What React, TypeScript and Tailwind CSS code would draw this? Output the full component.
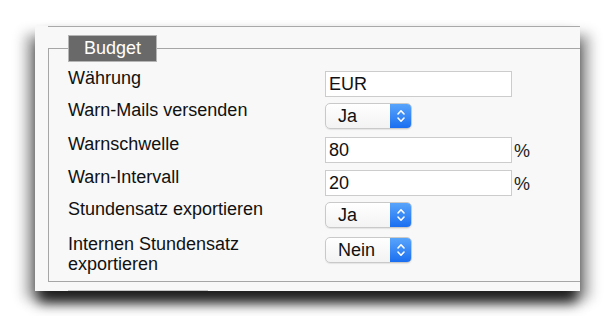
const font = { fontFamily: '"Liberation Sans", Arial, sans-serif' };

const Select = ({ value }: { value: string }) => (
  <div className="mt-[3px] flex h-[26px] w-[87px] overflow-hidden rounded-[5px] border border-[#c9c9c9] bg-gradient-to-b from-white to-[#f3f3f3] shadow-[0_1px_1px_rgba(0,0,0,0.08)]">
    <div className="flex-1 pl-[12px] text-[18px] leading-[24px] text-[#111]">{value}</div>
    <div className="flex w-[21px] items-center justify-center bg-gradient-to-b from-[#58a4fb] to-[#1a6ef0]">
      <svg width="10" height="16" viewBox="0 0 10 16" fill="none">
        <path d="M2 6l3-3.2L8 6" stroke="white" strokeWidth="1.6" strokeLinecap="round" strokeLinejoin="round" />
        <path d="M2 10l3 3.2L8 10" stroke="white" strokeWidth="1.6" strokeLinecap="round" strokeLinejoin="round" />
      </svg>
    </div>
  </div>
);

const TextInput = ({ value, suffix }: { value: string; suffix?: boolean }) => (
  <div className="mt-[3px] flex items-start">
    <div className="h-[26px] w-[187px] border border-[#cccccc] bg-white pl-[3px] text-[18px] leading-[24px] text-[#111]">
      {value}
    </div>
    {suffix && <span className="ml-[2px] mt-[4px] text-[18px] leading-[20px] text-[#222]">%</span>}
  </div>
);

const rows: { label: React.ReactNode; control: React.ReactNode; h: string }[] = [
  { label: "Währung", control: <TextInput value="EUR" />, h: "h-[32px]" },
  { label: "Warn-Mails versenden", control: <Select value="Ja" />, h: "h-[34px]" },
  { label: "Warnschwelle", control: <TextInput value="80" suffix />, h: "h-[33px]" },
  { label: "Warn-Intervall", control: <TextInput value="20" suffix />, h: "h-[32px]" },
  { label: "Stundensatz exportieren", control: <Select value="Ja" />, h: "h-[35px]" },
  {
    label: (
      <>
        Internen Stundensatz
        <br />
        exportieren
      </>
    ),
    control: <Select value="Nein" />,
    h: "h-[40px]",
  },
];

export default function App() {
  return (
    <div className="h-[316px] w-[614px] overflow-hidden bg-white" style={font}>
      <div className="pl-[35px] pt-[26px]">
        <div className="h-[265px] w-[545px] overflow-hidden bg-[#f8f8f8] shadow-[0_14px_12px_-2px_rgba(0,0,0,0.78),-10px_8px_12px_rgba(0,0,0,0.3),10px_8px_12px_rgba(0,0,0,0.3)]">
          <div className="ml-[13px] border-t border-[#a9a9a9]" />
          <fieldset className="ml-[13px] mt-[8px] w-[560px] border border-[#a6a6a6] pb-[7px] pl-[19px] pt-[6px]">
            <legend className="ml-0 border border-[#b5b5b5] bg-[#696969] px-[15px] text-[18px] leading-[25px] text-white">
              Budget
            </legend>
            {rows.map((r, i) => (
              <div key={i} className={`flex items-start ${r.h}`}>
                <div className="w-[257px] text-[18px] leading-[20px] text-[#111]">{r.label}</div>
                {r.control}
              </div>
            ))}
          </fieldset>
          <div className="ml-[33px] mt-[8px] h-[1px] w-[140px] bg-[#c4c4c4]" />
        </div>
      </div>
    </div>
  );
}
